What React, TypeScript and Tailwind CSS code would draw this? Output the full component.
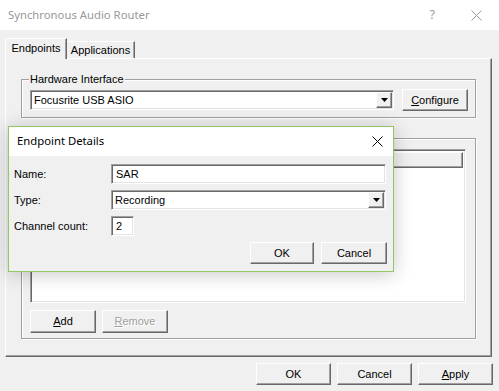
import React from 'react';

// classic win32 bevels
const raised =
  'bg-[#f0f0f0] border border-t-white border-l-white border-b-[#696969] border-r-[#696969] shadow-[inset_-1px_-1px_0_#a0a0a0]';
const sunken =
  'bg-white border border-t-[#a0a0a0] border-l-[#a0a0a0] border-b-white border-r-white shadow-[inset_1px_1px_0_#696969,inset_-1px_-1px_0_#e3e3e3]';
const etched = 'border border-[#a0a0a0] shadow-[inset_1px_1px_0_#fff,1px_1px_0_#fff]';

function CloseGlyph({ color }: { color: string }) {
  return (
    <svg width="11" height="11" viewBox="0 0 11 11">
      <path d="M0.5 0.5 L10.5 10.5 M10.5 0.5 L0.5 10.5" stroke={color} strokeWidth="1" fill="none" />
    </svg>
  );
}

function DropArrow() {
  return (
    <div className={`${raised} w-[16px] h-[16px] flex items-center justify-center`}>
      <svg width="7" height="4" viewBox="0 0 7 4">
        <path d="M0 0 H7 L3.5 4 Z" fill="#000" />
      </svg>
    </div>
  );
}

function Button({ children, className = '' }: { children: React.ReactNode; className?: string }) {
  return <div className={`${raised} flex items-center justify-center ${className}`}>{children}</div>;
}

function GroupBox({ label, className = '', children }: { label?: string; className?: string; children: React.ReactNode }) {
  return (
    <div className={`relative ${etched} ${className}`}>
      {label && (
        <span className="absolute left-[7px] top-[-8px] px-[1px] bg-[#f0f0f0] leading-[14px]">{label}</span>
      )}
      {children}
    </div>
  );
}

export default function App() {
  return (
    <div className="relative w-[499px] h-[391px] overflow-hidden bg-[#f0f0f0] text-[11px] text-black font-['Liberation_Sans',Arial,sans-serif]">
      {/* window caption */}
      <div className="h-[30px] bg-white flex items-center pl-[8px]">
        <span className="text-[11.3px] text-[#999] font-['Noto_Sans',sans-serif]">Synchronous Audio Router</span>
        <span className="ml-auto text-[12px] text-[#999] font-['Noto_Sans',sans-serif]">?</span>
        <div className="ml-[36px] mr-[17px] flex">
          <CloseGlyph color="#999" />
        </div>
      </div>

      <div className="pt-[7px] px-[5px]">
        {/* tabs */}
        <div className="flex items-end h-[21px] relative z-10">
          <div className="w-[62px] h-[21px] -mb-px bg-[#f0f0f0] border-t border-l border-t-white border-l-white border-r border-r-[#696969] shadow-[inset_-1px_0_0_#a0a0a0] flex items-center justify-center pb-[2px]">
            Endpoints
          </div>
          <div className="w-[68px] h-[17px] border-t border-t-white border-r border-r-[#696969] shadow-[inset_-1px_0_0_#a0a0a0] flex items-center justify-center">
            Applications
          </div>
        </div>

        {/* tab page */}
        <div className="w-[487px] h-[299px] border border-t-white border-l-white border-b-[#696969] border-r-[#696969] shadow-[inset_-1px_-1px_0_#a0a0a0] px-[15px] pt-[20px]">
          <GroupBox label="Hardware Interface" className="h-[39px] w-[455px] pl-[8px] pt-[9px]">
            <div className="flex items-center">
              <div className={`${sunken} w-[364px] h-[20px] flex items-center pl-[3px] pr-[1px]`}>
                <span className="flex-1">Focusrite USB ASIO</span>
                <DropArrow />
              </div>
              <Button className="ml-[8px] w-[66px] h-[22px]">
                <span>
                  <u>C</u>onfigure
                </span>
              </Button>
            </div>
          </GroupBox>

          <GroupBox className="mt-[20px] h-[201px] w-[455px] pl-[8px] pt-[10px]">
            <div className={`${sunken} w-[436px] h-[154px] p-[2px]`}>
              <div className={`${raised} h-[16px] w-full`} />
            </div>
            <div className="flex mt-[7px] gap-[6px]">
              <Button className="w-[66px] h-[23px]">
                <span>
                  <u>A</u>dd
                </span>
              </Button>
              <Button className="w-[66px] h-[23px] text-[#a0a0a0] [text-shadow:1px_1px_0_#fff]">
                <span>
                  <u>R</u>emove
                </span>
              </Button>
            </div>
          </GroupBox>
        </div>
      </div>

      {/* dialog buttons */}
      <div className="flex justify-end gap-[6px] pr-[6px] mt-[6px]">
        <Button className="w-[75px] h-[22px]">OK</Button>
        <Button className="w-[75px] h-[22px]">Cancel</Button>
        <Button className="w-[75px] h-[22px]">
          <span>
            <u>A</u>pply
          </span>
        </Button>
      </div>

      {/* Endpoint Details modal */}
      <div className="absolute left-[8px] top-[126px] w-[386px] h-[146px] bg-[#f0f0f0] border border-[#94c764] shadow-[0_2px_18px_rgba(0,0,0,0.22)]">
        <div className="h-[29px] bg-white flex items-center pl-[8px]">
          <span className="text-[11.3px] font-['Noto_Sans',sans-serif]">Endpoint Details</span>
          <div className="ml-auto mr-[10px] flex">
            <CloseGlyph color="#000" />
          </div>
        </div>
        <div className="pl-[5px] pr-[6px] pt-[8px]">
          <div className="flex items-center h-[20px]">
            <span className="w-[97px]">Name:</span>
            <div className={`${sunken} w-[275px] h-[20px] flex items-center pl-[4px]`}>SAR</div>
          </div>
          <div className="flex items-center h-[20px] mt-[6px]">
            <span className="w-[97px]">Type:</span>
            <div className={`${sunken} w-[275px] h-[20px] flex items-center pl-[3px] pr-[1px]`}>
              <span className="flex-1">Recording</span>
              <DropArrow />
            </div>
          </div>
          <div className="flex items-center h-[20px] mt-[6px]">
            <span className="w-[97px]">Channel count:</span>
            <div className={`${sunken} w-[23px] h-[20px] flex items-center pl-[4px]`}>2</div>
          </div>
          <div className="flex justify-end gap-[7px] mt-[6px]">
            <Button className="w-[64px] h-[22px]">OK</Button>
            <Button className="w-[66px] h-[22px]">Cancel</Button>
          </div>
        </div>
      </div>
    </div>
  );
}
